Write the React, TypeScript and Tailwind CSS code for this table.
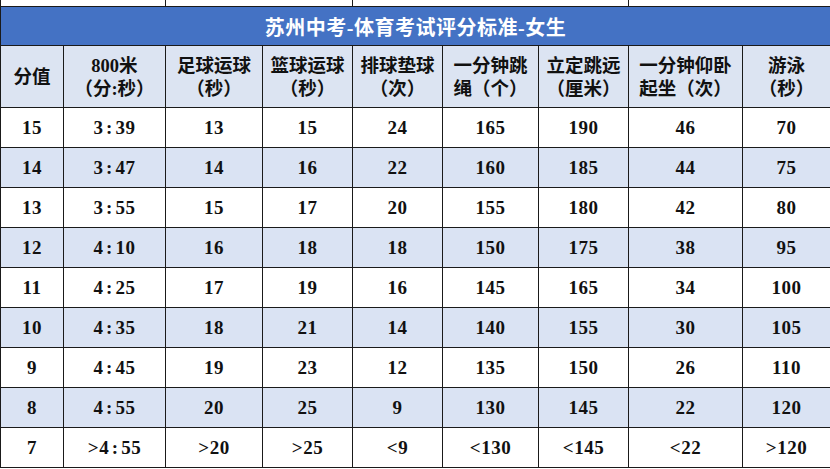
const cols = [63, 102, 97, 90, 90, 96, 90, 114, 88];

const headers: string[][] = [
  ['分值'],
  ['800米', '（分:秒）'],
  ['足球运球', '（秒）'],
  ['篮球运球', '（秒）'],
  ['排球垫球', '（次）'],
  ['一分钟跳', '绳（个）'],
  ['立定跳远', '（厘米）'],
  ['一分钟仰卧', '起坐（次）'],
  ['游泳', '（秒）'],
];

const rows: string[][] = [
  ['15', '3:39', '13', '15', '24', '165', '190', '46', '70'],
  ['14', '3:47', '14', '16', '22', '160', '185', '44', '75'],
  ['13', '3:55', '15', '17', '20', '155', '180', '42', '80'],
  ['12', '4:10', '16', '18', '18', '150', '175', '38', '95'],
  ['11', '4:25', '17', '19', '16', '145', '165', '34', '100'],
  ['10', '4:35', '18', '21', '14', '140', '155', '30', '105'],
  ['9', '4:45', '19', '23', '12', '135', '150', '26', '110'],
  ['8', '4:55', '20', '25', '9', '130', '145', '22', '120'],
  ['7', '>4:55', '>20', '>25', '<9', '<130', '<145', '<22', '>120'],
];

const cjk = "font-['Liberation_Serif','Noto_Sans_CJK_SC',serif]";

function Value({ v }: { v: string }) {
  const [a, b] = v.split(':');
  if (b === undefined) return <>{v}</>;
  return (
    <>
      {a}
      <span className="inline-block w-[12px] text-center">:</span>
      {b}
    </>
  );
}

export default function App() {
  return (
    <div className="w-[830px] h-[469px] overflow-hidden bg-white">
      <table className="w-[830px] table-fixed border-collapse text-[#111]">
        <colgroup>
          {cols.map((w, i) => (
            <col key={i} style={{ width: w }} />
          ))}
        </colgroup>
        <tbody>
          {/* tail of the previous table */}
          <tr className="h-[6px]">
            <td colSpan={2} className="border-x-[1.5px] border-b-[1.5px] border-[#1a1a1a] p-0" />
            <td colSpan={2} className="border-x-[1.5px] border-b-[1.5px] border-[#1a1a1a] p-0" />
            <td colSpan={3} className="border-x-[1.5px] border-b-[1.5px] border-[#1a1a1a] p-0" />
            <td colSpan={2} className="border-x-[1.5px] border-b-[1.5px] border-[#1a1a1a] p-0" />
          </tr>
          <tr className="h-[39px]">
            <td
              colSpan={9}
              className={`border-[1.5px] border-[#1a1a1a] bg-[#4472c4] p-0 pt-[5px] text-center text-[20px] font-bold tracking-[0.5px] text-white ${cjk}`}
            >
              苏州中考-体育考试评分标准-女生
            </td>
          </tr>
          <tr className="h-[62px]">
            {headers.map((h, i) => (
              <td
                key={i}
                className={`border-[1.5px] border-[#1a1a1a] bg-[#dce4f2] p-0 pt-[3px] text-center text-[18.5px] font-bold leading-[23px] ${cjk}`}
              >
                {h.map((line, j) => (
                  <div key={j} className="whitespace-nowrap">
                    {line}
                  </div>
                ))}
              </td>
            ))}
          </tr>
          {rows.map((r, i) => (
            <tr key={i} className={`h-[40px] ${i % 2 === 1 ? 'bg-[#dae3f3]' : 'bg-white'}`}>
              {r.map((v, j) => (
                <td
                  key={j}
                  className="border-[1.5px] border-[#1a1a1a] p-0 pt-[3px] text-center font-['Liberation_Serif',serif] text-[19px] font-bold tracking-[0.5px]"
                >
                  <Value v={v} />
                </td>
              ))}
            </tr>
          ))}
        </tbody>
      </table>
    </div>
  );
}
